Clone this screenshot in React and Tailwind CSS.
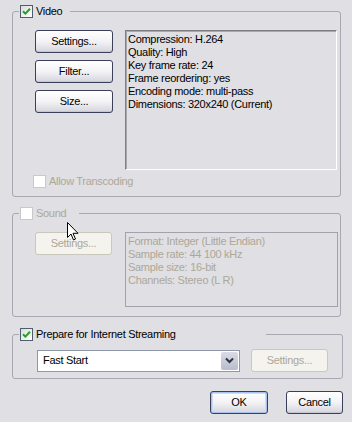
import React from "react";

const font = { fontFamily: '"Liberation Sans", Arial, sans-serif' };

function Check({ checked, disabled }) {
  return (
    <span
      className={
        "inline-flex h-[13px] w-[13px] shrink-0 items-center justify-center border " +
        (disabled
          ? "border-[#c9c8cc] bg-white"
          : "border-[#4d5f6e] bg-gradient-to-br from-[#dcdcdc] to-white")
      }
    >
      {checked && (
        <svg width="9" height="9" viewBox="0 0 9 9">
          <path d="M1 4.2 L3.4 6.6 L8 1.8" fill="none" stroke="#21a121" strokeWidth="2" />
        </svg>
      )}
    </span>
  );
}

function Button({ children, disabled, primary, className = "" }) {
  if (disabled) {
    return (
      <div
        className={
          "flex h-[23px] items-center justify-center rounded-[3px] border border-[#cac8bb] bg-[#f4f3ee] text-[#aca899] " +
          className
        }
      >
        {children}
      </div>
    );
  }
  return (
    <div
      className={
        "flex h-[23px] items-center justify-center rounded-[3px] border border-[#3a3f5a] bg-gradient-to-b from-white via-[#f3f3f6] to-[#d4d4de] text-black " +
        (primary ? "shadow-[inset_0_0_0_1px_#a9c2ec,inset_0_0_0_2px_#d0dcf4] " : "shadow-[inset_0_-1px_0_#c6c6d2] ") +
        className
      }
    >
      {children}
    </div>
  );
}

function Group({ legend, legendPad, checked, disabled, className = "", children }) {
  return (
    <fieldset
      className={
        "ml-[12px] rounded-[3px] border border-[#a8a7b2] px-0 " + className
      }
    >
      <legend className={"ml-[6px] flex h-[13px] items-center gap-[3px] pl-[1px] " + legendPad}>
        <Check checked={checked} disabled={disabled} />
        <span className={disabled ? "text-[#aca899]" : "text-black"}>{legend}</span>
      </legend>
      {children}
    </fieldset>
  );
}

export default function App() {
  return (
    <div
      className="relative h-[422px] w-[352px] overflow-hidden bg-[#e0dfe3] pt-[5px] text-[11px] leading-[13px] tracking-[-0.3px]"
      style={font}
    >
      <Group legend="Video" checked legendPad="pr-[8px]" className="w-[329px] pb-[8px]">
        <div className="flex pl-[22px] pt-[12px]">
          <div className="flex w-[78px] flex-col gap-[7px]">
            <Button>Settings...</Button>
            <Button>Filter...</Button>
            <Button>Size...</Button>
          </div>
          <div className="ml-[12px] h-[140px] w-[212px] border border-t-[#7d7d85] border-l-[#7d7d85] border-b-white border-r-white pl-[2px] pt-[2px] shadow-[inset_1px_1px_0_#a8a8b0]">
            <div>Compression: H.264</div>
            <div>Quality: High</div>
            <div>Key frame rate: 24</div>
            <div>Frame reordering: yes</div>
            <div>Encoding mode: multi-pass</div>
            <div>Dimensions: 320x240 (Current)</div>
          </div>
        </div>
        <div className="mt-[5px] flex items-center gap-[3px] pl-[20px] text-[#aca899]">
          <Check disabled />
          <span>Allow Transcoding</span>
        </div>
      </Group>

      <Group legend="Sound" disabled legendPad="pr-[13px]" className="mt-[10px] w-[329px] pb-[9px]">
        <div className="flex pl-[22px] pt-[12px]">
          <div className="w-[77px]">
            <Button disabled>Settings...</Button>
          </div>
          <div className="ml-[13px] h-[75px] w-[213px] border border-[#a3a2aa] pl-[2px] pt-[2px] text-[#aca899]">
            <div>Format: Integer (Little Endian)</div>
            <div>Sample rate: 44 100 kHz</div>
            <div>Sample size: 16-bit</div>
            <div>Channels: Stereo (L R)</div>
          </div>
        </div>
      </Group>

      <Group
        legend="Prepare for Internet Streaming"
        checked
        legendPad="pr-[90px]"
        className="mt-[11px] w-[331px] pb-[6px]"
      >
        <div className="flex items-center pl-[24px] pt-[8px]">
          <div className="flex h-[22px] w-[203px] items-center border border-[#8e98a8] bg-white">
            <span className="flex-1 pl-[5px]">Fast Start</span>
            <span className="mr-[1px] flex h-[18px] w-[17px] items-center justify-center rounded-[2px] bg-gradient-to-b from-[#dadbe6] to-[#b8bccc]">
              <svg width="9" height="7" viewBox="0 0 9 7">
                <path d="M1 1.5 L4.5 5 L8 1.5" fill="none" stroke="#2e3347" strokeWidth="2" />
              </svg>
            </span>
          </div>
          <Button disabled className="ml-[11px] h-[22px] w-[77px]">
            Settings...
          </Button>
        </div>
      </Group>

      <div className="mt-[12px] flex justify-end gap-[18px] pr-[9px]">
        <Button primary className="w-[58px]">OK</Button>
        <Button className="w-[57px]">Cancel</Button>
      </div>

      <svg
        className="absolute left-[67px] top-[222px]"
        width="12"
        height="19"
        viewBox="0 0 12 19"
      >
        <path
          d="M0.5 0.5 L0.5 15.5 L4 12 L6.5 18 L8.5 17 L6 11.3 L11 11.3 Z"
          fill="white"
          stroke="black"
          strokeWidth="1"
        />
      </svg>
    </div>
  );
}
